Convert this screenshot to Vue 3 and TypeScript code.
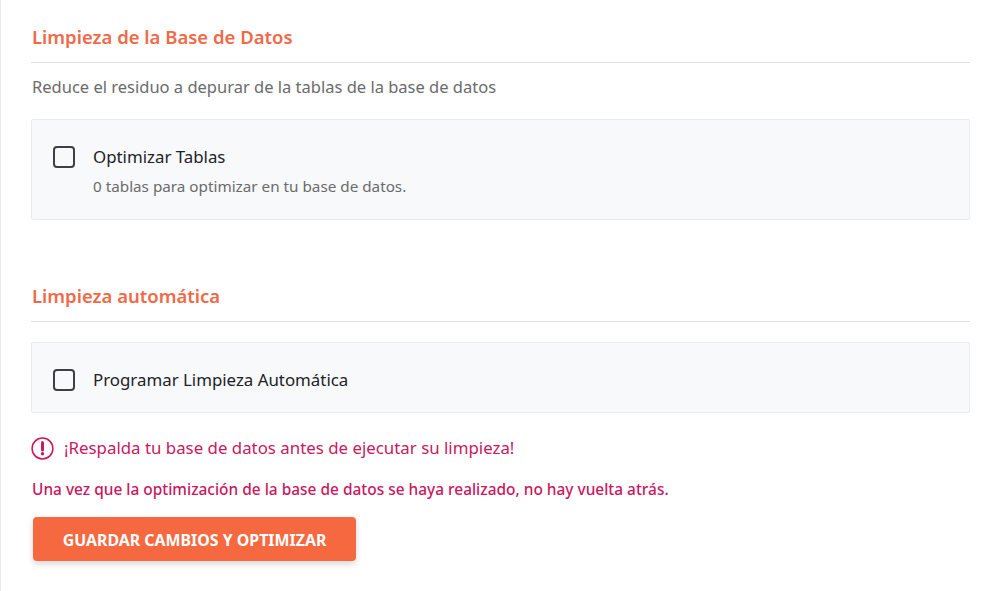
<script setup lang="ts">
import { ref } from 'vue'

const optimizeTables = ref(false)
const autoClean = ref(false)
</script>

<template>
  <main class="page">
    <section class="section first">
      <h2 class="title">Limpieza de la Base de Datos</h2>
      <p class="intro">Reduce el residuo a depurar de la tablas de la base de datos</p>
      <div class="panel">
        <label class="option">
          <input v-model="optimizeTables" type="checkbox" class="check" />
          <span class="label">Optimizar Tablas</span>
        </label>
        <p class="hint">0 tablas para optimizar en tu base de datos.</p>
      </div>
    </section>

    <section class="section second">
      <h2 class="title">Limpieza automática</h2>
      <div class="panel slim">
        <label class="option">
          <input v-model="autoClean" type="checkbox" class="check" />
          <span class="label">Programar Limpieza Automática</span>
        </label>
      </div>
    </section>

    <div class="warning">
      <svg class="warn-icon" width="23" height="23" viewBox="0 0 23 23" aria-hidden="true">
        <circle cx="11.5" cy="11.5" r="10.4" fill="none" stroke="currentColor" stroke-width="1.5" />
        <path d="M11.5 5.4v7.6" fill="none" stroke="currentColor" stroke-width="3" stroke-linecap="round" />
        <circle cx="11.5" cy="16.8" r="1.7" fill="currentColor" />
      </svg>
      <span>¡Respalda tu base de datos antes de ejecutar su limpieza!</span>
    </div>
    <p class="notice">Una vez que la optimización de la base de datos se haya realizado, no hay vuelta atrás.</p>
    <button type="button" class="save">GUARDAR CAMBIOS Y OPTIMIZAR</button>
  </main>
</template>

<style>
html,
body {
  margin: 0;
  background: #fff;
}
</style>

<style scoped>
.page {
  box-sizing: border-box;
  width: 984px;
  height: 591px;
  overflow: hidden;
  padding: 23px 14px 0 30px;
  border-left: 1px solid #e9ebee;
  font-family: "Noto Sans", "Open Sans", sans-serif;
}

.title {
  margin: 0;
  padding: 0 0 11px 1px;
  border-bottom: 1px solid #e0e2e6;
  color: #ef6a48;
  font-size: 18.5px;
  line-height: 28px;
  font-weight: 600;
}

.intro {
  margin: 12px 0 20px;
  padding-left: 1px;
  color: #6b6b6b;
  font-size: 16.5px;
  line-height: 24px;
}

.panel {
  box-sizing: border-box;
  height: 101px;
  padding: 25px 21px 0;
  background: #f8f9fb;
  border: 1px solid #e9ebef;
  border-radius: 2px;
}

.panel.slim {
  height: 71px;
  margin-top: 20px;
}

.second {
  margin-top: 62px;
}

.option {
  display: flex;
  align-items: center;
  gap: 18px;
  height: 24px;
}

.check {
  appearance: none;
  flex: none;
  box-sizing: border-box;
  width: 22px;
  height: 22px;
  margin: 0;
  background: transparent;
  border: 2px solid #3c4147;
  border-radius: 4px;
}

.label {
  color: #1d2127;
  font-size: 16.85px;
  line-height: 24px;
}

.hint {
  margin: 7px 0 0 40px;
  color: #6b6b6b;
  font-size: 15.25px;
  line-height: 20px;
}

.warning {
  display: flex;
  align-items: center;
  gap: 10px;
  margin-top: 23px;
  color: #c8185f;
  font-size: 16.85px;
  line-height: 24px;
}

.warn-icon {
  flex: none;
}

.notice {
  margin: 19px 0 0;
  padding-left: 1px;
  color: #c8185f;
  font-size: 15.45px;
  font-weight: 500;
  line-height: 20px;
}

.save {
  display: block;
  width: 323px;
  height: 44px;
  margin: 18px 0 0 2px;
  padding: 2px 0 0;
  background: #f66840;
  border: none;
  border-radius: 4px;
  box-shadow: 0 3px 6px rgba(0, 0, 0, 0.16);
  color: #fff;
  font-family: inherit;
  font-size: 15.9px;
  font-weight: 700;
}
</style>
